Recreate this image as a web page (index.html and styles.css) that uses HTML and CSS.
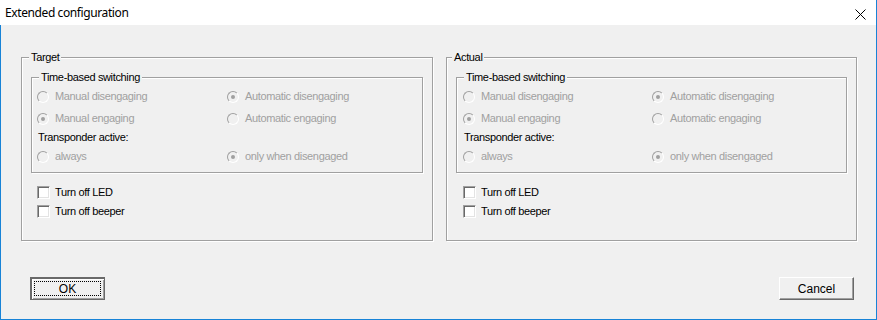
FILE: index.html
```html
<!DOCTYPE html>
<html>
<head>
<meta charset="utf-8">
<title>Extended configuration</title>
<link rel="stylesheet" href="styles.css">
</head>
<body>
<div class="window">
  <div class="titlebar">
    <span class="title">Extended configuration</span>
    <svg class="close" width="11" height="11" viewBox="0 0 11 11"><path d="M0.5 0.5 L10.5 10.5 M10.5 0.5 L0.5 10.5" stroke="#000" stroke-width="1" fill="none"/></svg>
  </div>
  <div class="content">
    <div class="groups">
      <fieldset class="group outer">
        <legend>Target</legend>
        <fieldset class="group inner">
          <legend>Time-based switching</legend>
          <div class="grid">
            <div class="opt"><span class="rb"></span>Manual disengaging</div>
            <div class="opt"><span class="rb on"></span>Automatic disengaging</div>
            <div class="opt r2"><span class="rb on"></span>Manual engaging</div>
            <div class="opt r2"><span class="rb"></span>Automatic engaging</div>
            <div class="sub">Transponder active:</div>
            <div class="opt"><span class="rb"></span>always</div>
            <div class="opt"><span class="rb on"></span>only when disengaged</div>
          </div>
        </fieldset>
        <div class="checks">
          <div class="chk"><span class="cb"></span>Turn off LED</div>
          <div class="chk"><span class="cb"></span>Turn off beeper</div>
        </div>
      </fieldset>
      <fieldset class="group outer second">
        <legend>Actual</legend>
        <fieldset class="group inner">
          <legend>Time-based switching</legend>
          <div class="grid">
            <div class="opt"><span class="rb"></span>Manual disengaging</div>
            <div class="opt"><span class="rb on"></span>Automatic disengaging</div>
            <div class="opt r2"><span class="rb on"></span>Manual engaging</div>
            <div class="opt r2"><span class="rb"></span>Automatic engaging</div>
            <div class="sub">Transponder active:</div>
            <div class="opt"><span class="rb"></span>always</div>
            <div class="opt"><span class="rb on"></span>only when disengaged</div>
          </div>
        </fieldset>
        <div class="checks">
          <div class="chk"><span class="cb"></span>Turn off LED</div>
          <div class="chk"><span class="cb"></span>Turn off beeper</div>
        </div>
      </fieldset>
    </div>
    <div class="buttons">
      <button class="btn default"><span class="focus">OK</span></button>
      <button class="btn">Cancel</button>
    </div>
  </div>
</div>
</body>
</html>
```
FILE: styles.css
```css
html, body {
  margin: 0;
  padding: 0;
  background: #f0f0f0;
}
.window {
  width: 875px;
  height: 319px;
  border: 1px solid #1883d7;
  border-top: none;
  background: #f0f0f0;
  font-family: "Liberation Sans", Arial, sans-serif;
  font-size: 11px;
  line-height: 13px;
  letter-spacing: -0.35px;
  color: #000;
  display: flex;
  flex-direction: column;
}
.titlebar {
  height: 25px;
  background: #fff;
  display: flex;
  align-items: center;
  justify-content: space-between;
  padding: 0 10px 0 5px;
  margin-left: -1px;
}
.title {
  font-family: "Noto Sans", "Open Sans", sans-serif;
  font-size: 12px;
  line-height: 16px;
  letter-spacing: -0.4px;
  margin-top: 1px;
}
.close {
  display: block;
  margin-top: 3px;
}
.content {
  flex: 1;
  display: flex;
  flex-direction: column;
  padding: 26px 19px 0 20px;
}
.groups {
  display: flex;
  gap: 13px;
}
.group {
  margin: 0;
  min-width: 0;
  border: 1px solid #a0a0a0;
  box-shadow: inset 1px 1px 0 #fff, 1px 1px 0 #fff;
}
.group > legend {
  padding: 0 2px;
  line-height: 13px;
  background: #f0f0f0;
}
.outer {
  width: 392px;
  flex: none;
  padding: 7px 9px 22px 9px;
}
.outer.second {
  width: 391px;
}
.outer > legend {
  margin-left: -2px;
}
.outer.second > legend {
  margin-left: -4px;
}
.inner {
  padding: 6px 5px 9px 5px;
}
.inner > legend {
  margin-left: 2px;
}
.second .inner {
  padding-left: 6px;
}
.second .inner > legend {
  margin-left: 1px;
}
.grid {
  display: grid;
  grid-template-columns: 190px 1fr;
  row-gap: 6px;
}
.second .grid {
  grid-template-columns: 189px 1fr;
}
.opt {
  display: flex;
  align-items: center;
  height: 13px;
  color: #a0a0a0;
  white-space: nowrap;
}
.r2 {
  margin-top: 3px;
}
.sub {
  grid-column: 1 / 3;
  height: 13px;
  padding-left: 1px;
}
.rb {
  box-sizing: border-box;
  width: 12px;
  height: 12px;
  border-radius: 50%;
  border: 1px solid;
  border-color: #a0a0a0 #fff #fff #a0a0a0;
  background: #f0f0f0;
  margin-right: 6px;
  display: flex;
  align-items: center;
  justify-content: center;
  flex: none;
}
.rb.on::after {
  content: "";
  width: 4px;
  height: 4px;
  border-radius: 50%;
  background: #a0a0a0;
}
.checks {
  display: flex;
  flex-direction: column;
  gap: 6px;
  margin-top: 13px;
  padding-left: 6px;
}
.second .checks {
  padding-left: 7px;
}
.chk {
  display: flex;
  align-items: center;
  height: 13px;
  white-space: nowrap;
}
.cb {
  box-sizing: border-box;
  width: 13px;
  height: 13px;
  border: 1px solid;
  border-color: #a0a0a0 #fff #fff #a0a0a0;
  box-shadow: inset 1px 1px 0 #696969, inset -1px -1px 0 #e3e3e3;
  background: #fff;
  margin-right: 5px;
  flex: none;
}
.buttons {
  display: flex;
  justify-content: space-between;
  margin-top: 36px;
  padding: 0 3px 0 9px;
}
.btn {
  box-sizing: border-box;
  width: 75px;
  height: 23px;
  margin: 0;
  padding: 0;
  font-family: "Liberation Sans", Arial, sans-serif;
  font-size: 12px;
  color: #000;
  background: #f0f0f0;
  border: 1px solid;
  border-color: #fff #696969 #696969 #fff;
  box-shadow: inset -1px -1px 0 #a0a0a0;
  display: flex;
  align-items: center;
  justify-content: center;
}
.btn.default {
  border: 1px solid #696969;
  box-shadow: inset 1px 1px 0 #696969, inset 2px 2px 0 #fff, inset -1px -1px 0 #a0a0a0;
}
.focus {
  box-sizing: border-box;
  width: 67px;
  height: 15px;
  border: 1px dotted #000;
  display: flex;
  align-items: center;
  justify-content: center;
  font-size: 12px;
}
```
